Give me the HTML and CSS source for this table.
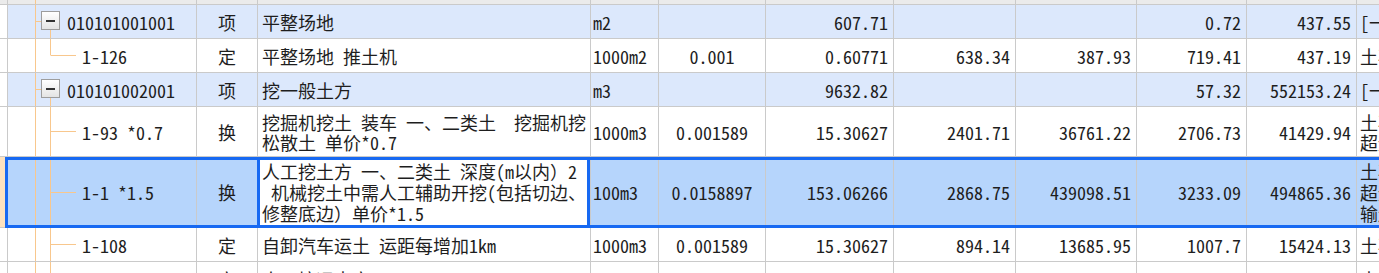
FILE: index.html
```html
<!DOCTYPE html>
<html lang="zh-CN">
<head>
<meta charset="utf-8">
<title>清单定额</title>
<link rel="stylesheet" href="styles.css">
</head>
<body>
<div class="sheet">
  <div class="row hdr">
    <div class="c ind"></div><div class="c tree"></div><div class="c typ"></div><div class="c desc"></div><div class="c unit"></div><div class="c coef"></div><div class="c num qty"></div><div class="c num p1"></div><div class="c num p2"></div><div class="c num p3"></div><div class="c num p4"></div><div class="c note"></div>
  </div>
  <div class="row band">
    <div class="c ind"></div><div class="c tree grp"><span class="tog"></span><span class="code">010101001001</span></div><div class="c typ">项</div><div class="c desc">平整场地</div><div class="c unit">m2</div><div class="c coef"></div><div class="c num qty">607.71</div><div class="c num p1"></div><div class="c num p2"></div><div class="c num p3">0.72</div><div class="c num p4">437.55</div><div class="c note">[一般土石方]</div>
  </div>
  <div class="row">
    <div class="c ind"></div><div class="c tree kid last"><span class="sub">1-126</span></div><div class="c typ">定</div><div class="c desc">平整场地 推土机</div><div class="c unit">1000m2</div><div class="c coef">0.001</div><div class="c num qty">0.60771</div><div class="c num p1">638.34</div><div class="c num p2">387.93</div><div class="c num p3">719.41</div><div class="c num p4">437.19</div><div class="c note">土石方工程</div>
  </div>
  <div class="row band">
    <div class="c ind"></div><div class="c tree grp"><span class="tog"></span><span class="code">010101002001</span></div><div class="c typ">项</div><div class="c desc">挖一般土方</div><div class="c unit">m3</div><div class="c coef"></div><div class="c num qty">9632.82</div><div class="c num p1"></div><div class="c num p2"></div><div class="c num p3">57.32</div><div class="c num p4">552153.24</div><div class="c note">[一般土石方]</div>
  </div>
  <div class="row tall">
    <div class="c ind"></div><div class="c tree kid"><span class="sub">1-93 *0.7</span></div><div class="c typ">换</div><div class="c desc">挖掘机挖土 装车 一、二类土  挖掘机挖<br>松散土 单价*0.7</div><div class="c unit">1000m3</div><div class="c coef">0.001589</div><div class="c num qty">15.30627</div><div class="c num p1">2401.71</div><div class="c num p2">36761.22</div><div class="c num p3">2706.73</div><div class="c num p4">41429.94</div><div class="c note">土石方工程<br>超运距</div>
  </div>
  <div class="row sel">
    <div class="c ind"></div><div class="c tree kid"><span class="sub">1-1 *1.5</span></div><div class="c typ">换</div><div class="c desc cur">人工挖土方 一、二类土 深度(m以内）2<br> 机械挖土中需人工辅助开挖(包括切边、<br>修整底边）单价*1.5</div><div class="c unit">100m3</div><div class="c coef">0.0158897</div><div class="c num qty">153.06266</div><div class="c num p1">2868.75</div><div class="c num p2">439098.51</div><div class="c num p3">3233.09</div><div class="c num p4">494865.36</div><div class="c note">土石方工程<br>超运距<br>输送</div>
  </div>
  <div class="row">
    <div class="c ind"></div><div class="c tree kid"><span class="sub">1-108</span></div><div class="c typ">定</div><div class="c desc">自卸汽车运土 运距每增加1km</div><div class="c unit">1000m3</div><div class="c coef">0.001589</div><div class="c num qty">15.30627</div><div class="c num p1">894.14</div><div class="c num p2">13685.95</div><div class="c num p3">1007.7</div><div class="c num p4">15424.13</div><div class="c note">土石方工程</div>
  </div>
  <div class="row">
    <div class="c ind"></div><div class="c tree kid"><span class="sub">1-109</span></div><div class="c typ">定</div><div class="c desc">人工挖运土方</div><div class="c unit">100m3</div><div class="c coef">3.65E-07</div><div class="c num qty">0.53997</div><div class="c num p1">733.23</div><div class="c num p2">396.44</div><div class="c num p3">719.43</div><div class="c num p4">419.33</div><div class="c note">土石方工程</div>
  </div>
</div>
</body>
</html>
```
FILE: styles.css
```css
:root {
  --grid: #cacaca;
  --tl: #f8c78d;
  --band: #dce8fc;
  --selbg: #b6d5fc;
  --selbd: #1769f2;
}

html, body {
  margin: 0;
  padding: 0;
  background: #ffffff;
  overflow: hidden;
}

body {
  font-family: "Noto Sans Mono CJK SC", "Noto Sans CJK SC", monospace;
  font-size: 18px;
  color: #1e1e1e;
}

.sheet {
  display: flex;
  flex-direction: column;
  width: max-content;
}

.row {
  display: flex;
  height: 34px;
}

.row.hdr { height: 5px; }
.row.tall { height: 50px; }
.row.sel { height: 71px; position: relative; }

.c {
  box-sizing: border-box;
  border-right: 1px solid var(--grid);
  border-bottom: 1px solid var(--grid);
  display: flex;
  align-items: center;
  white-space: pre;
  line-height: 20px;
  overflow: hidden;
  flex: none;
}

.ind { width: 8px; }
.tree { width: 189px; }
.typ { width: 61px; justify-content: center; }
.desc { width: 333px; padding-left: 4px; }
.unit { width: 68px; padding-left: 2px; }
.coef { width: 107px; justify-content: center; }
.qty { width: 128px; }
.p1 { width: 122px; }
.p2 { width: 121px; }
.p3 { width: 110px; }
.p4 { width: 110px; }
.num { justify-content: flex-end; padding-right: 5px; }
.note { width: 220px; padding-left: 3px; }

.hdr .c { background-color: #ebebeb; }
.band .c { background-color: var(--band); }
.band .ind { background-color: #ffffff; }

/* tree guide lines */
.tree {
  background-image: linear-gradient(var(--tl), var(--tl));
  background-size: 1px 100%;
  background-position: 27px 0;
  background-repeat: no-repeat;
}

.tree.grp {
  background-image:
    linear-gradient(var(--tl), var(--tl)),
    linear-gradient(var(--tl), var(--tl)),
    linear-gradient(var(--tl), var(--tl));
  background-size: 1px 100%, 6px 1px, 1px 50%;
  background-position: 27px 0, 28px 50%, 42px 100%;
}

.tree.kid {
  background-image:
    linear-gradient(var(--tl), var(--tl)),
    linear-gradient(var(--tl), var(--tl)),
    linear-gradient(var(--tl), var(--tl));
  background-size: 1px 100%, 1px 100%, 25px 1px;
  background-position: 27px 0, 42px 0, 43px 50%;
}

.tree.kid.last {
  background-size: 1px 100%, 1px 50%, 25px 1px;
}

.tog {
  flex: none;
  box-sizing: border-box;
  width: 19px;
  height: 19px;
  margin-left: 33px;
  margin-bottom: 2px;
  border: 1px solid #9d9d9d;
  background: linear-gradient(#ffffff, #e4e4e4);
  display: flex;
  align-items: center;
  justify-content: center;
}

.tog::before {
  content: "";
  width: 9px;
  height: 2px;
  background: #333333;
}

.code { margin-left: 7px; }
.sub { margin-left: 74px; }

/* selected row */
.sel .c { background-color: var(--selbg); line-height: 21px; }
.sel .ind { background-color: #fde2bf; }
.sel .desc.cur { background-color: #ffffff; position: relative; overflow: visible; }

.sel .desc.cur::after {
  content: "";
  position: absolute;
  top: 0;
  bottom: 0;
  left: -1px;
  right: 0;
  border-left: 3px solid var(--selbd);
  border-right: 3px solid var(--selbd);
  pointer-events: none;
}

.sel::after {
  content: "";
  position: absolute;
  left: 5px;
  right: 0;
  top: 0;
  bottom: 0;
  border: 3px solid var(--selbd);
  pointer-events: none;
}
```
